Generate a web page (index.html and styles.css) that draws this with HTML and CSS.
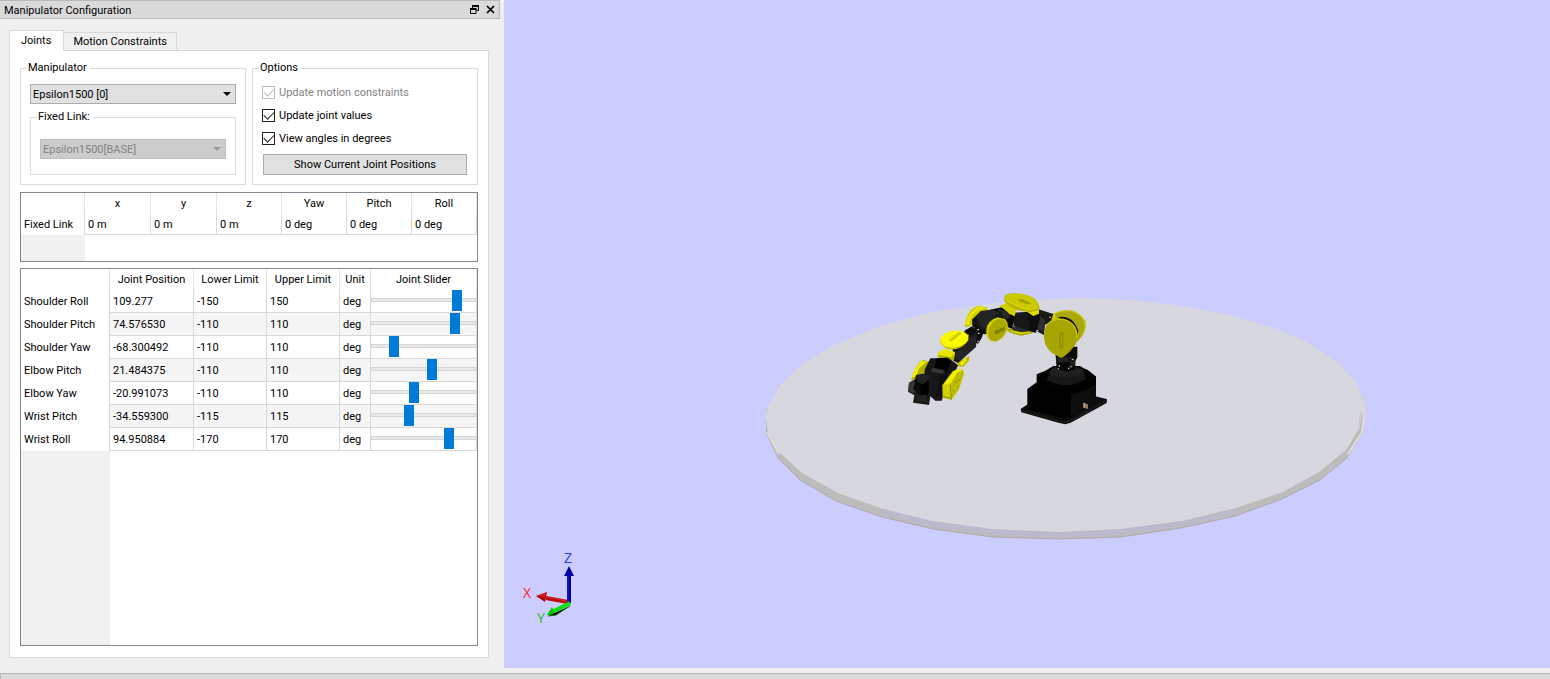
FILE: index.html
```html
<!DOCTYPE html>
<html lang="en">
<head>
<meta charset="utf-8">
<title>Manipulator Configuration</title>
<link rel="stylesheet" href="styles.css">
</head>
<body>
<div class="window">
  <main class="workspace">
    <section class="dock">
      <header class="dock-title">
        <h1>Manipulator Configuration</h1>
        <button class="tool" aria-label="Float"><svg width="9" height="9" viewBox="0 0 9 9"><path d="M2.5 3V.5h6v5H6.500" fill="none" stroke="#000"/><path d="M2 1h7" stroke="#000" stroke-width="2"/><path d="M.5 3.500h5.500v5H.5z" fill="none" stroke="#000"/><path d="M0 4h6.500" stroke="#000" stroke-width="2"/></svg></button>
        <button class="tool" aria-label="Close"><svg width="9" height="9" viewBox="0 0 9 9"><path d="M1 1l7 7M8 1L1 8" stroke="#000" stroke-width="1.700"/></svg></button>
      </header>
      <div class="dock-body">
        <div class="tabs" role="tablist">
          <button class="tab active" role="tab" aria-selected="true">Joints</button>
          <button class="tab" role="tab" aria-selected="false">Motion Constraints</button>
        </div>
        <div class="pane">
          <div class="groups">
            <fieldset class="group">
              <legend>Manipulator</legend>
              <div class="combo">
                <select aria-label="Manipulator"><option>Epsilon1500 [0]</option></select>
              </div>
              <fieldset class="group inner">
                <legend>Fixed Link:</legend>
                <div class="combo">
                  <select aria-label="Fixed link" disabled><option>Epsilon1500[BASE]</option></select>
                </div>
              </fieldset>
            </fieldset>
            <fieldset class="group options">
              <legend>Options</legend>
              <label class="check off"><input type="checkbox" checked disabled>Update motion constraints</label>
              <label class="check"><input type="checkbox" checked>Update joint values</label>
              <label class="check"><input type="checkbox" checked>View angles in degrees</label>
              <button class="push">Show Current Joint Positions</button>
            </fieldset>
          </div>
          <div class="grid-frame link-frame">
            <table class="grid link">
              <colgroup><col class="c64"><col class="c66"><col class="c66"><col class="c65"><col class="c65"><col class="c65"><col class="c65"></colgroup>
              <thead><tr><td></td><th>x</th><th>y</th><th>z</th><th>Yaw</th><th>Pitch</th><th>Roll</th></tr></thead>
              <tbody><tr><th>Fixed Link</th><td>0 m</td><td>0 m</td><td>0 m</td><td>0 deg</td><td>0 deg</td><td>0 deg</td></tr></tbody>
            </table>
            <div class="gutter"></div>
          </div>
          <div class="grid-frame joint-frame">
            <table class="grid joints">
              <colgroup><col class="c89"><col class="c84"><col class="c73"><col class="c73"><col class="c31"><col class="c106"></colgroup>
              <thead><tr><td></td><th>Joint Position</th><th>Lower Limit</th><th>Upper Limit</th><th>Unit</th><th>Joint Slider</th></tr></thead>
              <tbody>
                <tr><th>Shoulder Roll</th><td>109.277</td><td>-150</td><td>150</td><td>deg</td><td class="sl"><input type="range" aria-label="Shoulder Roll" min="-150" max="150" step="any" value="107"></td></tr>
                <tr><th>Shoulder Pitch</th><td>74.576530</td><td>-110</td><td>110</td><td>deg</td><td class="sl"><input type="range" aria-label="Shoulder Pitch" min="-110" max="110" step="any" value="74.576"></td></tr>
                <tr><th>Shoulder Yaw</th><td>-68.300492</td><td>-110</td><td>110</td><td>deg</td><td class="sl"><input type="range" aria-label="Shoulder Yaw" min="-110" max="110" step="any" value="-69.500"></td></tr>
                <tr><th>Elbow Pitch</th><td>21.484375</td><td>-110</td><td>110</td><td>deg</td><td class="sl"><input type="range" aria-label="Elbow Pitch" min="-110" max="110" step="any" value="20"></td></tr>
                <tr><th>Elbow Yaw</th><td>-20.991073</td><td>-110</td><td>110</td><td>deg</td><td class="sl"><input type="range" aria-label="Elbow Yaw" min="-110" max="110" step="any" value="-22"></td></tr>
                <tr><th>Wrist Pitch</th><td>-34.559300</td><td>-115</td><td>115</td><td>deg</td><td class="sl"><input type="range" aria-label="Wrist Pitch" min="-115" max="115" step="any" value="-35"></td></tr>
                <tr><th>Wrist Roll</th><td>94.950884</td><td>-170</td><td>170</td><td>deg</td><td class="sl"><input type="range" aria-label="Wrist Roll" min="-170" max="170" step="any" value="91.500"></td></tr>
              </tbody>
            </table>
            <div class="gutter wide"></div>
          </div>
        </div>
      </div>
    </section>
    <section class="view" aria-label="3D view">
      <svg class="scene" viewBox="504 0 1046 668">
        <!-- Floor disc -->
        <path fill="#bcbcbc" d="M766 418L767 407 1366 407 1363 433 1348 457 1320 480 1282 499 1235 516 1181 528 1121 537 1058 539 993 537 933 529 882 517 836 501 800 480 777 457 766 434z"/>
        <path fill="#bbb9cc" d="M880 508L932 521 992 529 1057 532 1120 529 1182 521 1236 508V514L1181 526 1121 535 1058 537 993 535 933 527 882 515z"/>
        <path fill="none" stroke="#ababae" d="M777 457L800 480 836 501 882 517 933 529 993 537 1058 539 1121 537 1181 528 1235 516 1282 499 1320 480 1348 457"/>
        <path fill="#d6d7df" d="M766 418L767 407 780 385 803 363 838 343 880 326 932 312 992 303 1047 299 1083 298 1130 300 1183 306 1230 315 1277 329 1307 342 1336 361 1357 383 1366 407 1362 415 1359 429 1346 450 1319 472 1283 492 1236 508 1182 521 1120 529 1058 532 992 529 932 521 880 508 838 493 802 473 779 452 768 432z"/>
        <path fill="none" stroke="#c6c6c8" d="M767 406v7M780 384l-2 4M1361 411l-2 15"/>
        <path fill="none" stroke="#dededf" stroke-width="2" d="M1365 409L1362 432 1348 454M767 432l12 22"/>
        <!-- Robot arm -->
        <g transform="translate(890 280) scale(.33333)">
          <path fill="#0d0d0d" d="M392 387L420 368 600 345 650 357V369L542 428 526 433 508 429 394 397z"/>
          <path fill="#1a1a1a" d="M394 389L520 424 540 420 650 358V364L542 426 524 429 394 394z"/>
          <path fill="#000" d="M412 327L440 307V283L466 272 490 258H570L600 275 618 290V363L545 409 522 416 412 387z"/>
          <path fill="#0d0d0d" d="M543 342Q590 335 618 312V363L592 385 543 411z"/>
          <path fill="none" stroke="#000" stroke-width="3" d="M617 328Q604 334 602 352"/>
          <path fill="#020202" d="M442 284Q480 340 540 323 600 318 618 290L590 268 500 262z"/>
          <path fill="#171717" d="M482 272Q528 250 580 270L588 298Q530 333 469 299z"/>
          <ellipse cx="529" cy="275" rx="50" ry="17" fill="#1f1f1f"/>
          <path fill="#88786d" d="M580 368l14 5v14l-14-4z"/><path fill="#b49e90" d="M580 368l5 2v14l-5-2z"/>
          <path fill="#080808" d="M495 200H562V232L556 244V268L534 276 500 266z"/>
          <path fill="#202020" d="M500 230h35v17h-35zM540 228l17 10-4 22-15 5z"/>
          <path fill="#d8d8d8" d="M506 256h4v4h-4zM534 263h4v4h-4zM541 259h4v3h-4zM503 265h4v3h-4zM546 237h4v3h-4z"/>
          <!-- Shoulder covers -->
          <path fill="#aaa90a" d="M494 101Q512 89 539 90 570 96 586 124 593 153 565 182L520 196 470 152z"/>
          <path fill="none" stroke="#d2d10c" stroke-width="4" d="M497 100Q516 91 539 92 568 98 582 122 590 146 574 168" stroke-dasharray="5 2"/>
          <path fill="#111" d="M505 111Q549 104 565 153L558 178 540 140z"/>
          <path fill="#d0cf08" d="M478 102l14-4 8 17-14 9z"/>
          <path fill="#191919" d="M445 88L490 102 482 126 465 134 462 165 440 154z"/>
          <path fill="#303030" d="M449 108l17 12-6 35-18-10z"/><path fill="#ddd" d="M478 110h4v4h-4zM441 150h4v4h-4z"/>
          <path fill="#a7a500" d="M473 130Q487 113 521 116 566 127 563 178 556 203 525 227L514 234 502 228Q465 211 462 175 461 151 473 130z"/>
          <path fill="none" stroke="#cfcd00" stroke-width="3" d="M472 134Q489 116 521 118 563 129 561 176"/>
          <path fill="none" stroke="#737200" stroke-width="2" d="M510 158v45M518 158v45M510 158h7M510 203h7"/>
          <!-- Upper arm -->
          <path fill="#aaa900" d="M350 145L430 153 426 160 395 167Q360 161 350 150z"/>
          <path fill="#d4d300" d="M365 147L424 152 422 158 392 162 362 155z"/>
          <path fill="#2f2f2f" d="M362 138L420 145V154L395 157 368 151z"/>
          <path fill="#171717" d="M373 98L448 94 450 115 437 158 370 138z"/>
          <path fill="#0e0e0e" d="M410 97L448 94 450 115 437 158 420 154z"/>
          <path fill="#080808" d="M300 89L335 82 374 102V118L365 146 340 136 320 102z"/>
          <path fill="#272727" d="M320 85L356 95 361 113 345 119z"/>
          <path fill="#d1d000" d="M328 77L350 70 378 92 374 109 358 102 350 94z"/>
          <path fill="#dddb00" d="M414 92L447 84 447 101 430 108 413 97z"/>
          <path fill="#b7b500" d="M342 60L344 48Q354 36 391 42 432 47 443 67L449 83 446 91 421 97 380 91Q350 76 342 62z"/>
          <path fill="#cbc900" d="M344 49Q360 35 397 42 430 47 443 67L446 77 436 85 414 88 380 79 352 65z"/>
          <path fill="none" stroke="#eae900" stroke-width="2" d="M343 54Q353 66 385 80L417 90 446 82"/>
          <path stroke="#858300" stroke-width="2" d="M384 58l6 6M390 58l8 8M397 59l9 9M404 62l9 8M411 64l9 8M383 60l29 12M393 58l29 13"/>
          <!-- Elbow -->
          <path fill="#c9c800" d="M224 137L229 116Q239 82 269 77L291 83 294 91 249 125 241 138 230 142z"/>
          <path fill="#e7e600" d="M226 134L231 116Q245 85 272 79L288 84Q256 91 243 113L239 134z"/>
          <path fill="#151515" d="M246 119L273 93 305 89 335 97 338 120 298 161 281 163 247 139z"/>
          <path fill="#242424" d="M257 109L276 94 310 91 331 99 313 110 288 151 271 138z"/>
          <path fill="#0b0b0b" d="M255 133L281 156 275 174 264 191 251 187z"/>
          <path fill="#ddd" d="M262 147h5v4h-5zM264 158h4v4h-4zM262 182h4v4h-4zM280 164h3v5h-3z"/>
          <path fill="#cccb00" d="M289 150Q291 122 322 112L345 117Q359 132 350 154 342 177 316 186L302 183Q286 172 289 150z"/>
          <path fill="#aaa900" d="M296 155Q300 128 324 117L342 119Q356 130 347 154 339 177 316 184L304 181Q293 171 296 155z"/>
          <path stroke="#605f00" stroke-width="2" d="M314 157l30-13M315 161l29-12M317 149l5 13M324 147l5 11M331 144l5 11M339 141l4 10"/>
          <!-- Forearm -->
          <path fill="#bfbd00" d="M204 247L238 228 237 242 219 261 202 259z"/>
          <path fill="#efee00" d="M208 251L230 233 228 243 216 257z"/>
          <path fill="#171717" d="M224 153L246 139 261 149 258 200 204 249 190 242 188 208z"/>
          <path fill="#242424" d="M234 176L258 164V200L205 247 195 221z"/>
          <path fill="#0c0c0c" d="M225 151l20-10 15 11-22 16z"/>
          <path fill="#c0bf00" d="M150 176L236 163 235 180Q223 200 196 208L173 208Q150 195 150 179z"/>
          <ellipse cx="193" cy="177" rx="42" ry="25" fill="#faf900" transform="rotate(-8 193 177)"/>
          <path fill="none" stroke="#d2d100" stroke-width="2" d="M152 184Q160 205 188 207 220 203 234 180" stroke-dasharray="4 2"/>
          <path stroke="#a09f00" stroke-width="2" d="M178 181l29-23M184 183l29-24M178 178l8 5M185 172l8 5M191 167l8 5M198 162l8 5M205 157l8 5"/>
          <path fill="#e8e700" d="M144 217L164 207 195 216 192 240 178 242 145 232z"/>
          <path fill="#b2b100" d="M145 224l39 8 9-12-1 20-14 2-33-9z"/>
          <!-- Wrist -->
          <path fill="#adac00" d="M63 302L71 275 89 245 101 240 122 247 110 278 84 292z"/>
          <path fill="#f0ef00" d="M65 294L72 274 91 244 112 244 88 265 78 289z"/>
          <path fill="#171717" d="M121 235L143 235 174 233 204 255 193 283 173 309 155 362 136 362 101 330 104 269z"/>
          <path fill="#000" d="M140 235L169 233 183 245 172 273 133 263z"/>
          <path fill="#353535" d="M126 263L160 270 165 286 156 281 122 275z"/>
          <path fill="#101010" d="M151 285L179 271 160 311 154 350 137 350z"/>
          <path fill="#d0cf00" d="M158 353L157 316 188 274 201 267 219 269 222 281 207 328 184 360z"/>
          <path fill="#bdbb00" d="M184 309L202 275 220 274 221 282 206 328 184 357z"/>
          <path fill="#f2f100" d="M160 315L190 276 204 267 217 269 201 278 182 309z"/>
          <path fill="none" stroke="#646300" stroke-width="2" d="M181 314l3 45M198 304v5M207 299v4M190 330v4M161 350l20 5"/>
          <path fill="#1b1b1b" d="M78 285L99 281 123 285 121 350 117 375 69 368 73 346 54 335 57 308 75 298z"/>
          <path fill="#383838" d="M57 309l17-6 4 22-8 15-15-7z"/>
          <path fill="#0b0b0b" d="M76 301L104 285 119 310 111 368 82 361 81 334 69 328z"/>
          <path fill="#222" d="M82 287l30-3 9 9-15 24-24-12zM82 343l30 4-1 20-35-4z"/>
          <path fill="#020202" d="M93 318l23-20v36l-24 15z"/>
        </g>
        <!-- Axis triad -->
        <path stroke="#b80808" stroke-width="4" d="M546 598L568 602"/><path stroke="#e62020" d="M546 597L567 601"/>
        <path fill="#a90505" d="M536 596L547 592 545 602z"/><path fill="#e61a1a" d="M537 596l9-3-1 4z"/>
        <path stroke="#0000ad" stroke-width="4" d="M569 603V575"/><path stroke="#2222dc" d="M568 602V575"/>
        <path fill="#0000b2" d="M569 566L574 576H564z"/>
        <path stroke="#08e008" stroke-width="4" d="M570 603L554 611"/>
        <path fill="#05c805" d="M547 615L552 607 556 615z"/><path stroke="#067c06" d="M548 616l8-1 14-9"/>
        <text class="axis" x="523" y="598" fill="#f22">X</text>
        <text class="axis" x="537" y="623" fill="#1fb81f">Y</text>
        <text class="axis" x="564" y="563" fill="#33f">Z</text>
      </svg>
    </section>
  </main>
  <footer class="bottom-dock"></footer>
</div>
</body>
</html>
```
FILE: styles.css
```css
* { box-sizing: border-box; }
body { margin: 0; background: #efefef; color: #000; font: 11px/14px Roboto, "Liberation Sans", sans-serif; }
button, input, select { font: inherit; color: inherit; margin: 0; }
.window { display: flex; flex-direction: column; height: 100vh; overflow: hidden; }
.workspace { display: flex; flex: 1; min-height: 0; gap: 4px; }
.dock { display: flex; flex-direction: column; flex: 0 0 500px; }
.dock-title { display: flex; align-items: center; height: 19px; padding: 2px 4px 0; border: 1px solid #b9b9b9; border-left: 0; background: #dadada; }
.dock-title h1 { flex: 1; margin: 0; font-size: 11px; font-weight: normal; }
.tool { display: flex; align-items: center; justify-content: center; width: 16px; height: 14px; padding: 0 0 2px; border: 0; background: none; }
.tool:last-child { margin-right: -3px; }
.dock-body { display: flex; flex: 1; flex-direction: column; min-height: 0; padding: 11px 11px 10px 9px; }
.tabs { display: flex; align-items: flex-end; height: 21px; }
.tab { height: 19px; padding: 0 9px; border: 1px solid #d9d9d9; border-left: 0; background: #f0f0f0; white-space: nowrap; }
.tab.active { position: relative; height: 21px; padding: 0 12px 0 11px; border-left: 1px solid #d9d9d9; border-bottom: 0; background: #fff; }
.pane { display: flex; flex: 1; flex-direction: column; min-height: 0; margin-top: -1px; padding: 10px; border: 1px solid #d9d9d9; background: #fff; }
.tabs { z-index: 1; }
.groups { display: grid; grid-template-columns: 1fr 1fr; grid-template-rows: 100%; gap: 6px; height: 124px; margin-bottom: 7px; }
.group { min-width: 0; margin: 0; padding: 9px 9px 0; border: 1px solid #dcdcdc; }
.group legend { height: 14px; margin-left: -3px; padding: 0 3px 0 1px; }
.group.inner { margin-top: 6px; padding: 15px 9px; }
.combo { position: relative; display: flex; height: 20px; }
.combo::after { content: ""; position: absolute; right: 5px; top: 8px; border: 4px solid transparent; border-top-color: #000; border-bottom: 0; }
.combo:has(:disabled)::after { border-top-color: #999; }
select { appearance: none; width: 100%; height: 20px; padding: 1px 2px 0; border: 1px solid #adadad; border-radius: 0; background: #e1e1e1; }
select:disabled { border-color: #bfbfbf; background: #ccc; color: #838383; opacity: 1; }
.group.options { display: flex; flex-direction: column; padding-top: 6px; }
.check { display: flex; align-items: center; gap: 4px; height: 23px; white-space: nowrap; }
.check.off { color: #838383; }
.check input { appearance: none; width: 13px; height: 13px; border: 1px solid #222; background: #fff; }
.check input::after { content: ""; display: block; width: 9px; height: 5px; margin: 1px; border: solid #222; border-width: 0 0 1px 1px; transform: rotate(-45deg); }
.check.off input, .check.off input::after { border-color: #bcbcbc; }
.push { height: 21px; margin: 4px 1px 0; border: 1px solid #adadad; background: #e1e1e1; }
.grid-frame { display: flex; flex-direction: column; overflow: hidden; border: 1px solid #828790; }
.link-frame { flex: 0 0 70px; margin-bottom: 6px; }
.joint-frame { flex: 1; margin-bottom: 1px; }
.grid { width: 100%; table-layout: fixed; border-collapse: separate; border-spacing: 0; }
.grid td, .grid th { overflow: hidden; padding: 0 3px; border-right: 1px solid #d9d9d9; font-weight: normal; text-align: left; white-space: nowrap; }
.grid thead tr { height: 21px; }
.grid thead td, .grid thead th { border-color: #e5e5e5; text-align: center; }
.grid tbody td { padding-top: 2px; border-bottom: 1px solid #d9d9d9; }
.grid tbody th { padding-top: 1px; }
.link tbody tr { height: 21px; }
.joints tbody tr { height: 23px; }
.joints tbody tr:nth-child(even) td { background: #f5f5f5; }
.grid tbody .sl { padding: 0; }
.gutter { flex: 1; width: 64px; background: #f0f0f0; }
.gutter.wide { width: 89px; }
.c31 { width: 31px; } .c64 { width: 64px; } .c65 { width: 65px; } .c66 { width: 66px; } .c73 { width: 73px; }
.c84 { width: 84px; } .c89 { width: 89px; } .c106 { width: 106px; }
input[type="range"] { appearance: none; display: block; width: 100%; height: 20px; margin-bottom: 2px; background: none; }
input[type="range"]::-webkit-slider-runnable-track { height: 4px; border: 1px solid #d6d6d6; background: #e7eaea; }
input[type="range"]::-webkit-slider-thumb { appearance: none; width: 10px; height: 21px; margin-top: -9px; border: 0; border-radius: 0; background: #007ad9; }
.view { flex: 1; min-width: 0; background: #ccccff; }
.scene { display: block; width: 100%; height: 100%; }
.axis { font: 14px "Open Sans", sans-serif; }
.bottom-dock { height: 6px; margin-top: 5px; border: solid #b9b9b9; border-width: 1px 0 0 1px; background: #dadada; }
```
